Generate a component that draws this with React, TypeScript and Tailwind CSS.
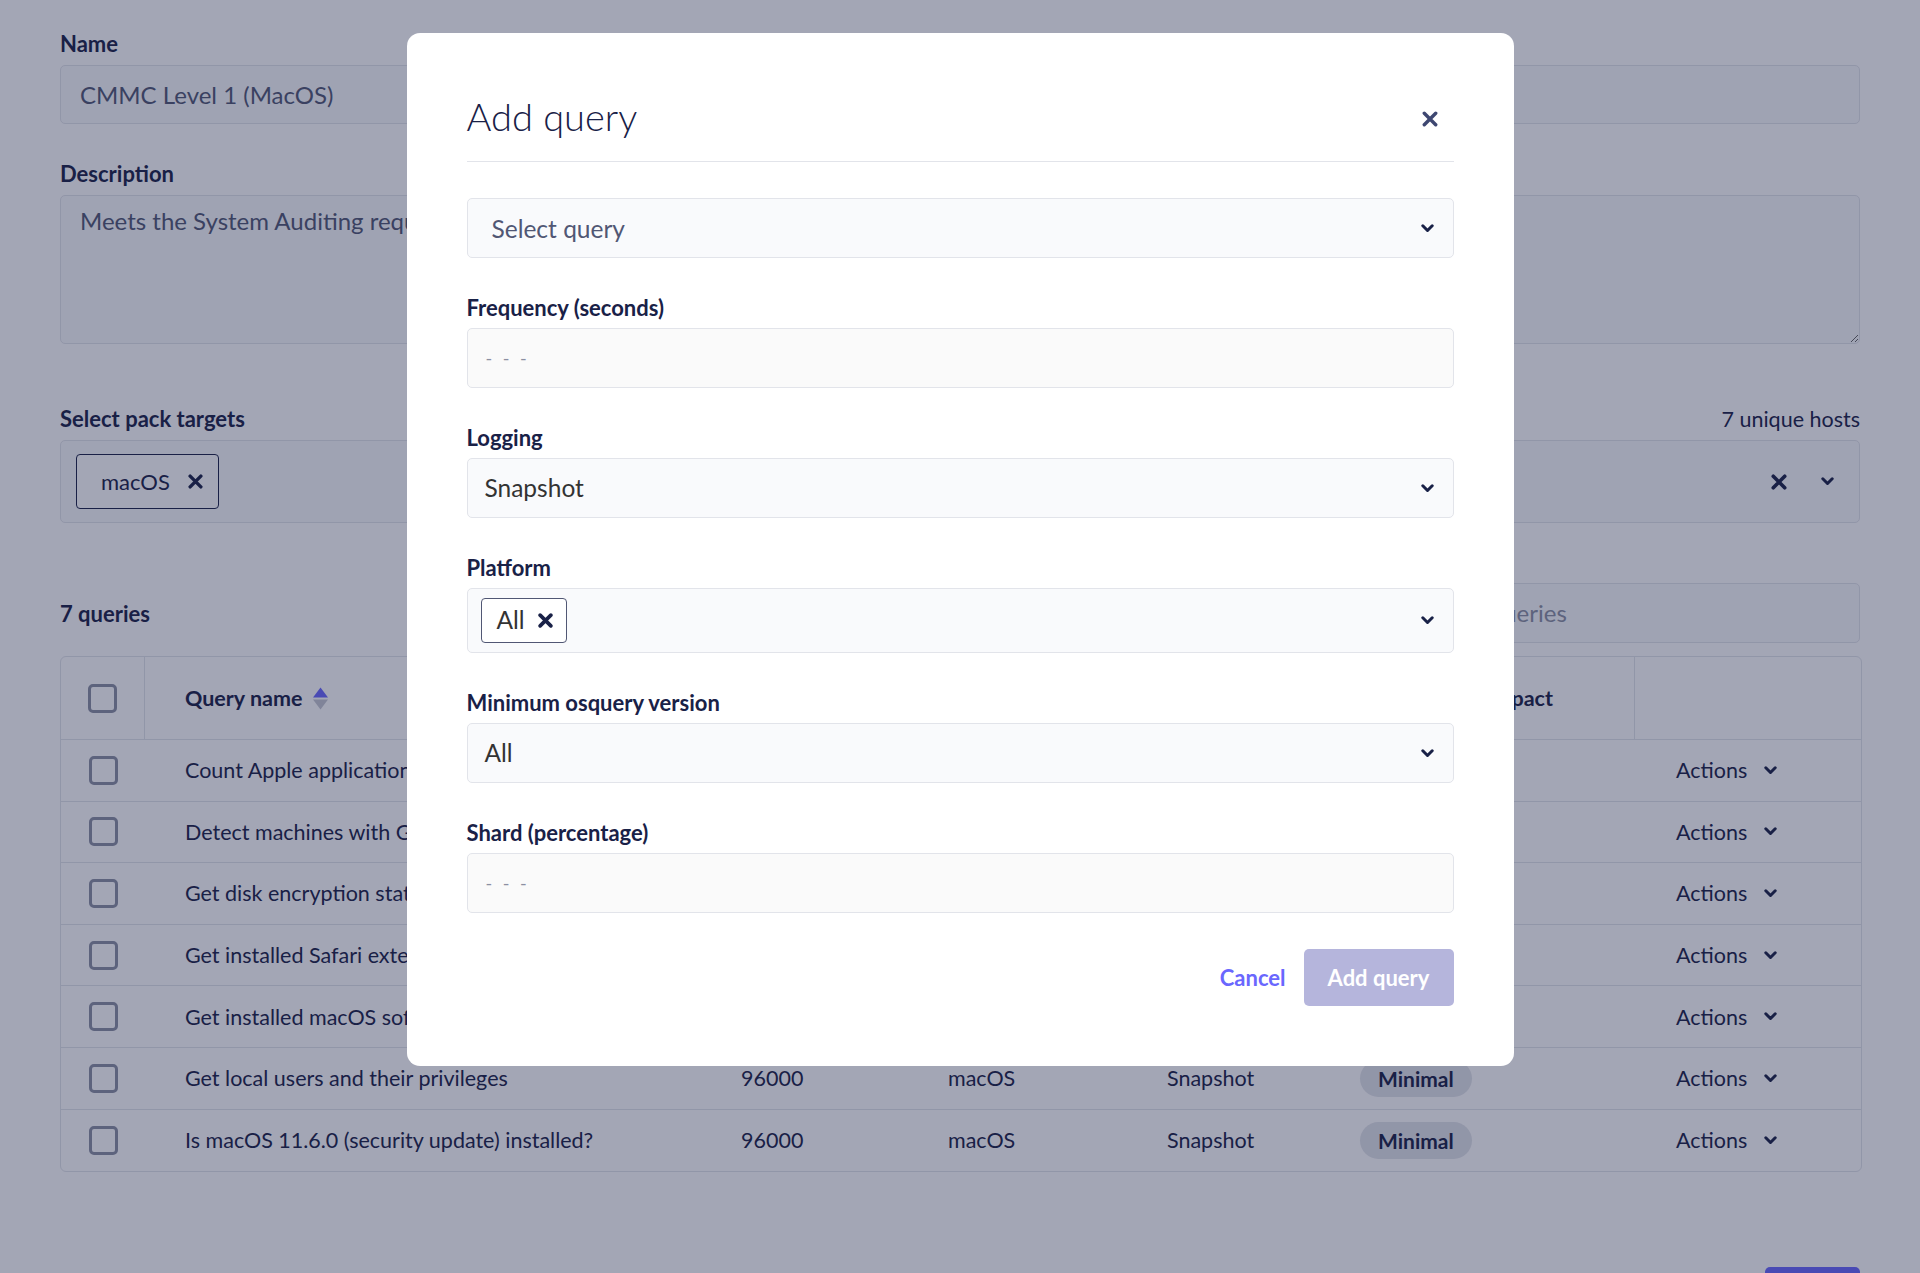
import React from 'react';

const FONT = "font-['Lato','Noto_Sans',sans-serif]";

const Chevron: React.FC<{ className?: string }> = ({ className = '' }) => (
    <svg viewBox="0 0 13 9" className={`w-[13px] h-[9px] ${className}`} fill="none">
        <path d="M1.8 1.8l4.7 4.7 4.7-4.7" stroke="#192147" strokeWidth="3" strokeLinecap="round" strokeLinejoin="round" />
    </svg>
);

const Cross: React.FC<{ size?: number; className?: string; weight?: number }> = ({ size = 14, className = '', weight = 2.9 }) => (
    <svg viewBox="0 0 14 14" width={size} height={size} className={className} fill="none">
        <path d="M2 2l10 10M12 2L2 12" stroke="currentColor" strokeWidth={weight} strokeLinecap="round" />
    </svg>
);

const Checkbox: React.FC = () => (
    <div className="w-[29px] h-[29px] rounded-[5px] border-[3px] border-[#8b8fa2] bg-white" />
);

const SortIcon: React.FC = () => (
    <svg viewBox="0 0 15 23" className="w-[15px] h-[23px]">
        <path d="M7.5 0.5L15 10.5H0z" fill="#6a67fe" />
        <path d="M7.5 22.5L15 12.5H0z" fill="#c5c7d1" />
    </svg>
);

const queries = [
    'Count Apple applications installed',
    'Detect machines with Gatekeeper disabled',
    'Get disk encryption status',
    'Get installed Safari extensions',
    'Get installed macOS software',
    'Get local users and their privileges',
    'Is macOS 11.6.0 (security update) installed?',
];

const cols = 'grid grid-cols-[84px_555px_207px_219px_193px_316px_1fr]';

const Field: React.FC<{ label: string; children: React.ReactNode }> = ({ label, children }) => (
    <div className="flex flex-col gap-[8px]">
        <div className="h-[24px] leading-[24px] text-[22px] font-bold text-[#192147]">{label}</div>
        {children}
    </div>
);

const SelectBox: React.FC<{ children: React.ReactNode; muted?: boolean }> = ({ children, muted }) => (
    <div className="h-[60px] rounded-[5px] border border-[#e2e4ea] bg-[#f9fafc] flex items-center justify-between pl-[17px] pr-[19px]">
        <span className={`text-[24.5px] ${muted ? 'text-[#515774] pl-[7px] pt-[2px]' : 'text-[#333333]'}`}>{children}</span>
        <Chevron />
    </div>
);

const TextBox: React.FC = () => (
    <div className="h-[60px] rounded-[5px] border border-[#e2e4ea] bg-[#fafafa] flex items-center pl-[18px]">
        <span className="text-[18px] text-[#8b8fa2] tracking-[3px]">- - -</span>
    </div>
);

export default function App() {
    return (
        <div className={`relative min-h-screen bg-white ${FONT} text-[#192147]`}>
            {/* Page behind the modal */}
            <div className="px-[60px] pt-[32px] pb-[40px]">
                <div className="h-[24px] leading-[24px] text-[22px] font-bold">Name</div>
                <div className="mt-[9px] h-[59px] rounded-[5px] border border-[#e2e4ea] bg-[#f9fafc] flex items-center px-[19px] text-[24px] text-[#515774]">
                    CMMC Level 1 (MacOS)
                </div>

                <div className="mt-[38px] h-[24px] leading-[24px] text-[22px] font-bold">Description</div>
                <textarea
                    readOnly
                    value="Meets the System Auditing requirements of the CMMC Level 1 framework for macOS devices."
                    className="mt-[9px] block w-full h-[149px] rounded-[5px] border border-[#e2e4ea] bg-[#f9fafc] px-[19px] py-[9px] text-[24px] leading-[31px] text-[#515774] outline-none"
                />

                <div className="mt-[63px] h-[24px] leading-[24px] flex justify-between">
                    <span className="text-[22px] font-bold">Select pack targets</span>
                    <span className="text-[21.5px] text-[#192147]">7 unique hosts</span>
                </div>
                <div className="mt-[9px] h-[83px] rounded-[5px] border border-[#e2e4ea] bg-[#f9fafc] flex items-center justify-between pl-[15px] pr-[25px]">
                    <div className="h-[55px] pl-[24px] pr-[15px] rounded-[4px] border border-[#192147] bg-white flex items-center gap-[18px]">
                        <span className="text-[22px]">macOS</span>
                        <Cross size={15} weight={3.2} className="text-[#192147]" />
                    </div>
                    <div className="flex items-center gap-[34px]">
                        <Cross size={16} weight={3.2} className="text-[#192147]" />
                        <Chevron />
                    </div>
                </div>

                <div className="mt-[60px] h-[60px] flex items-center justify-between">
                    <span className="text-[22px] font-bold">7 queries</span>
                    <div className="w-[500px] h-[60px] rounded-[5px] border border-[#e2e4ea] bg-[#f9fafc] flex items-center pl-[52px] text-[24px] text-[#8b8fa2]">
                        Search queries
                    </div>
                </div>

                <div className="mt-[13px] -mr-[2px] rounded-[6px] border border-[#e2e4ea] overflow-hidden">
                    <div className={`${cols} h-[83px] border-b border-[#e2e4ea] text-[21.5px] font-bold`}>
                        <div className="flex items-center justify-center border-r border-[#e2e4ea]"><Checkbox /></div>
                        <div className="flex items-center gap-[11px] pl-[40px] border-r border-[#e2e4ea]">
                            Query name <SortIcon />
                        </div>
                        <div className="flex items-center pl-[41px] border-r border-[#e2e4ea]">Frequency</div>
                        <div className="flex items-center pl-[41px] border-r border-[#e2e4ea]">Platform</div>
                        <div className="flex items-center pl-[41px] border-r border-[#e2e4ea]">Logging</div>
                        <div className="flex items-center pl-[41px] border-r border-[#e2e4ea]">Performance impact</div>
                        <div />
                    </div>
                    {queries.map((q, i) => (
                        <div key={q} className={`${cols} h-[61.6px] text-[21.5px] ${i < queries.length - 1 ? 'border-b border-[#e2e4ea]' : ''}`}>
                            <div className="flex items-center justify-center"><Checkbox /></div>
                            <div className="flex items-center pl-[40px]">{q}</div>
                            <div className="flex items-center pl-[41px]">96000</div>
                            <div className="flex items-center pl-[41px]">macOS</div>
                            <div className="flex items-center pl-[41px]">Snapshot</div>
                            <div className="flex items-center pl-[41px]">
                                <span className="h-[37px] px-[18px] rounded-full bg-[#e2e4ea] flex items-center font-bold text-[21px]">Minimal</span>
                            </div>
                            <div className="flex items-center gap-[17px] pl-[41px]">
                                Actions <Chevron />
                            </div>
                        </div>
                    ))}
                </div>

                <div className="mt-[95px] flex justify-end">
                    <button className="w-[95px] h-[50px] rounded-[5px] bg-[#6a67fe] text-white font-bold text-[22px]">Save</button>
                </div>
            </div>

            {/* Overlay + modal */}
            <div className="fixed inset-0 bg-[#192147]/40">
                <div className="mx-auto mt-[33px] w-[1107px] rounded-[13px] bg-white px-[60px] pb-[60px]">
                    <div className="pt-[61px] pb-[22px] border-b border-[#e2e4ea] flex items-center justify-between">
                        <h1 className="text-[38px] leading-[45px] font-light text-[#192147]">Add query</h1>
                        <Cross size={16} weight={3} className="text-[#3e4771] mr-[16px] mt-[4px]" />
                    </div>

                    <div className="mt-[36px] flex flex-col gap-[38px]">
                        <SelectBox muted>Select query</SelectBox>
                        <Field label="Frequency (seconds)"><TextBox /></Field>
                        <Field label="Logging"><SelectBox>Snapshot</SelectBox></Field>
                        <Field label="Platform">
                            <div className="h-[65px] rounded-[5px] border border-[#e2e4ea] bg-[#f9fafc] flex items-center justify-between pl-[13px] pr-[19px]">
                                <div className="h-[45px] pl-[15px] pr-[13px] rounded-[4px] border border-[#515774] bg-white flex items-center gap-[13px]">
                                    <span className="text-[24.5px] text-[#333333]">All</span>
                                    <Cross size={15} weight={3.4} className="text-[#192147]" />
                                </div>
                                <Chevron />
                            </div>
                        </Field>
                        <Field label="Minimum osquery version"><SelectBox>All</SelectBox></Field>
                        <Field label="Shard (percentage)"><TextBox /></Field>
                    </div>

                    <div className="mt-[36px] flex items-center justify-end gap-[18px]">
                        <button className="text-[22px] font-bold text-[#6a67fe]">Cancel</button>
                        <button className="w-[150px] h-[57px] rounded-[5px] bg-[#b5b5dc] text-white text-[22px] font-bold">Add query</button>
                    </div>
                </div>
            </div>
        </div>
    );
}
